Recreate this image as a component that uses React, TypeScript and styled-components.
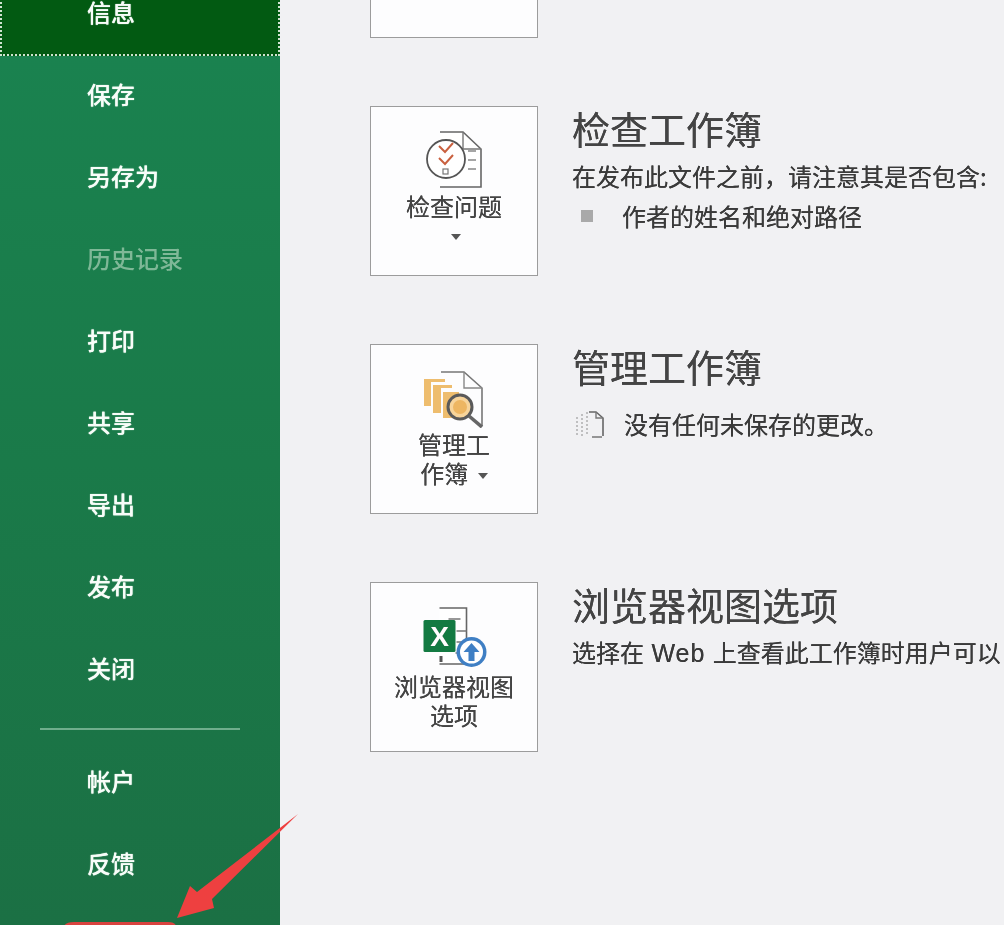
import React from "react";
import styled, { createGlobalStyle } from "styled-components";

const Global = createGlobalStyle`
  html, body { margin: 0; padding: 0; background: #f1f1f3; }
  body { font-family: "Noto Sans CJK SC", "Liberation Sans", sans-serif; }
`;
const Page = styled.div`
  position: relative; display: flex; width: 1004px; height: 925px; overflow: hidden;
  background: #f1f1f3; filter: blur(0.6px);
`;
const Sidebar = styled.nav`
  flex: 0 0 280px; height: 925px; overflow: hidden;
  background: linear-gradient(180deg, #1a8350 0%, #1a7a49 50%, #1b7044 100%);
`;
const NavList = styled.div`margin-top: -29px; display: flex; flex-direction: column;`;
const NavItem = styled.div<{ $active?: boolean; $muted?: boolean }>`
  box-sizing: border-box; flex: none; height: ${p => (p.$active ? "85px" : "82px")}; display: flex; align-items: center; padding-left: 87px;
  padding-bottom: ${p => (p.$active ? "3px" : "0")};
  margin-bottom: ${p => (p.$active ? "-3px" : "0")};
  font-size: 24px; font-weight: 500; line-height: 1;
  color: ${p => (p.$muted ? "#7fb897" : "#f8fdf9")};
  text-shadow: ${p => (p.$muted ? "none" : "0 0 1px #f8fdf9")};
  background: ${p => (p.$active ? "#025a12" : "transparent")};
  outline: ${p => (p.$active ? "2px dotted #cfe3d0" : "none")};
  outline-offset: -2px;
`;
const Divider = styled.div`height: 2px; margin: 19px 40px 10px; width: 200px; background: #6fae8c;`;
const Main = styled.main`
  flex: 1; min-width: 0; padding-left: 90px; margin-top: -132px;
  display: flex; flex-direction: column; gap: 68px;
`;
const Section = styled.section`display: flex; gap: 34px;`;
const Card = styled.div`
  box-sizing: border-box; flex: 0 0 168px; height: 170px; padding-top: 23px;
  display: flex; flex-direction: column; align-items: center;
  background: #fdfdfe; border: 1.5px solid #9c9c9c;
  font-size: 24px; line-height: 29px; color: #444; text-align: center;
  text-shadow: 0 0 0.6px #444;
  svg { flex: none; }
`;
const CardLabel = styled.div`margin-top: 1px;`;
const TightLabel = styled.div`margin-top: -1px;`;
const CaretRow = styled.div`height: 29px; margin-top: 2px; display: flex; align-items: center; justify-content: center;`;
const Caret = styled.span`
  display: inline-block; width: 0; height: 0; margin-left: 4px; vertical-align: middle;
  border-left: 5px solid transparent; border-right: 5px solid transparent; border-top: 6px solid #555;
`;
const Body = styled.div`min-width: 0; white-space: nowrap; color: #3a3a3a; text-shadow: 0 0 0.6px #3a3a3a;`;
const Title = styled.h2`margin: 0; height: 48px; font-size: 38px; line-height: 44px; font-weight: 400; color: #444;`;
const Desc = styled.div`margin-top: 5px; font-size: 24px; line-height: 34px;`;
const Latin = styled.span`font-family: "Liberation Sans", sans-serif; font-size: 25px; letter-spacing: 1px; margin: 0 2px;`;
const BulletRow = styled.div`margin-top: 6px; display: flex; align-items: center; font-size: 24px; line-height: 34px; padding-left: 9px;`;
const Bullet = styled.span`width: 12px; height: 12px; background: #a9a9a9; margin-right: 29px;`;
const NoteRow = styled.div`margin-top: 15px; display: flex; align-items: center; gap: 18px; font-size: 24px; line-height: 34px; padding-left: 2px;`;
const Arrow = styled.svg`position: absolute; left: 0; top: 0; pointer-events: none;`;

const items = ["保存", "另存为", "历史记录", "打印", "共享", "导出", "发布", "关闭"];

const InspectIcon = () => (
  <svg width="62" height="60" viewBox="-1 0 62 60" fill="none">
    <path d="M16 2H39L57 19V57H16" stroke="#666" strokeWidth="1.6" fill="#fff" />
    <path d="M39 2V19H57" stroke="#777" strokeWidth="1.4" />
    <path d="M44 21h8M44 30h8M44 39h8" stroke="#888" strokeWidth="1.4" />
    <circle cx="22" cy="29" r="19" fill="#fff" stroke="#555" strokeWidth="1.8" />
    <path d="M15 16l6 6 8-9M15 28l6 6 8-9" stroke="#c9603f" strokeWidth="2" />
    <rect x="19" y="39" width="5" height="5" stroke="#777" strokeWidth="1.2" />
  </svg>
);
const ManageIcon = () => (
  <svg width="62" height="60" viewBox="0 0 62 60" fill="none">
    <path d="M18 4H41L59 20V58" stroke="#777" strokeWidth="1.6" />
    <path d="M41 4V20H59" stroke="#888" strokeWidth="1.4" />
    <path d="M1 11H22V14H8V38H1Z" fill="#eebd6e" />
    <path d="M10 17H29V20H18V45H10Z" fill="#eebd6e" />
    <path d="M20 24H36V50H20Z" fill="#eebd6e" />
    <circle cx="37" cy="39" r="12" fill="#f7d49a" stroke="#5a5a5a" strokeWidth="3" />
    <circle cx="37" cy="39" r="7" fill="#edb662" />
    <path d="M46 48L59 59" stroke="#666" strokeWidth="3.6" />
  </svg>
);
const BrowserIcon = () => (
  <svg width="66" height="66" viewBox="-1.5 0 66 66" fill="none">
    <path d="M17 2H44V58H17" stroke="#666" strokeWidth="1.6" fill="#fff" />
    <path d="M26 13H38M34 25H44M34 36H44M33 47H40" stroke="#777" strokeWidth="1.5" />
    <rect x="1" y="14" width="32" height="32" rx="1.5" fill="#137a42" />
    <text x="17" y="39.5" textAnchor="middle" fontSize="28" fontWeight="700" fill="#fff" fontFamily="Liberation Sans, sans-serif">X</text>
    <rect x="17" y="50" width="3" height="6" fill="#555" />
    <circle cx="49" cy="46" r="15" fill="#3f7fc4" />
    <circle cx="49" cy="46" r="11.5" fill="#fff" />
    <path d="M49 37L57 46H52V55H46V46H41Z" fill="#3f7fc4" />
  </svg>
);
const PageGlyph = () => (
  <svg width="32" height="30" viewBox="0 0 32 30" fill="none">
    <path d="M3 8V27M8 5V27M13 3V27" stroke="#aaa" strokeWidth="1.4" strokeDasharray="2 2" />
    <path d="M15 3H22L29 9V27" stroke="#666" strokeWidth="1.6" />
    <path d="M22 3V9H29M18 28H28" stroke="#777" strokeWidth="1.4" />
  </svg>
);

export default function App() {
  return (
    <Page>
      <Global />
      <Sidebar>
        <NavList>
          <NavItem $active>信息</NavItem>
          {items.map(t => (
            <NavItem key={t} $muted={t === "历史记录"}>{t}</NavItem>
          ))}
          <Divider />
          <NavItem>帐户</NavItem>
          <NavItem>反馈</NavItem>
        </NavList>
      </Sidebar>
      <Main>
        <Section>
          <Card />
        </Section>
        <Section>
          <Card>
            <InspectIcon />
            <CardLabel>检查问题</CardLabel>
            <CaretRow><Caret /></CaretRow>
          </Card>
          <Body>
            <Title>检查工作簿</Title>
            <Desc>在发布此文件之前，请注意其是否包含:</Desc>
            <BulletRow><Bullet />作者的姓名和绝对路径</BulletRow>
          </Body>
        </Section>
        <Section>
          <Card>
            <ManageIcon />
            <CardLabel>管理工<br />作簿 <Caret /></CardLabel>
          </Card>
          <Body>
            <Title>管理工作簿</Title>
            <NoteRow><PageGlyph />没有任何未保存的更改。</NoteRow>
          </Body>
        </Section>
        <Section>
          <Card>
            <BrowserIcon />
            <TightLabel>浏览器视图<br />选项</TightLabel>
          </Card>
          <Body>
            <Title>浏览器视图选项</Title>
            <Desc>选择在 <Latin>Web</Latin> 上查看此工作簿时用户可以</Desc>
          </Body>
        </Section>
      </Main>
      <Arrow width="1004" height="925" viewBox="0 0 1004 925">
        <path d="M298 814L212 899L214 908L177 918L190 886L197 892Z" fill="#ee4040" />
        <path d="M64 926Q66 922 74 922H168Q175 922 176 926Z" fill="#d9433f" />
      </Arrow>
    </Page>
  );
}
